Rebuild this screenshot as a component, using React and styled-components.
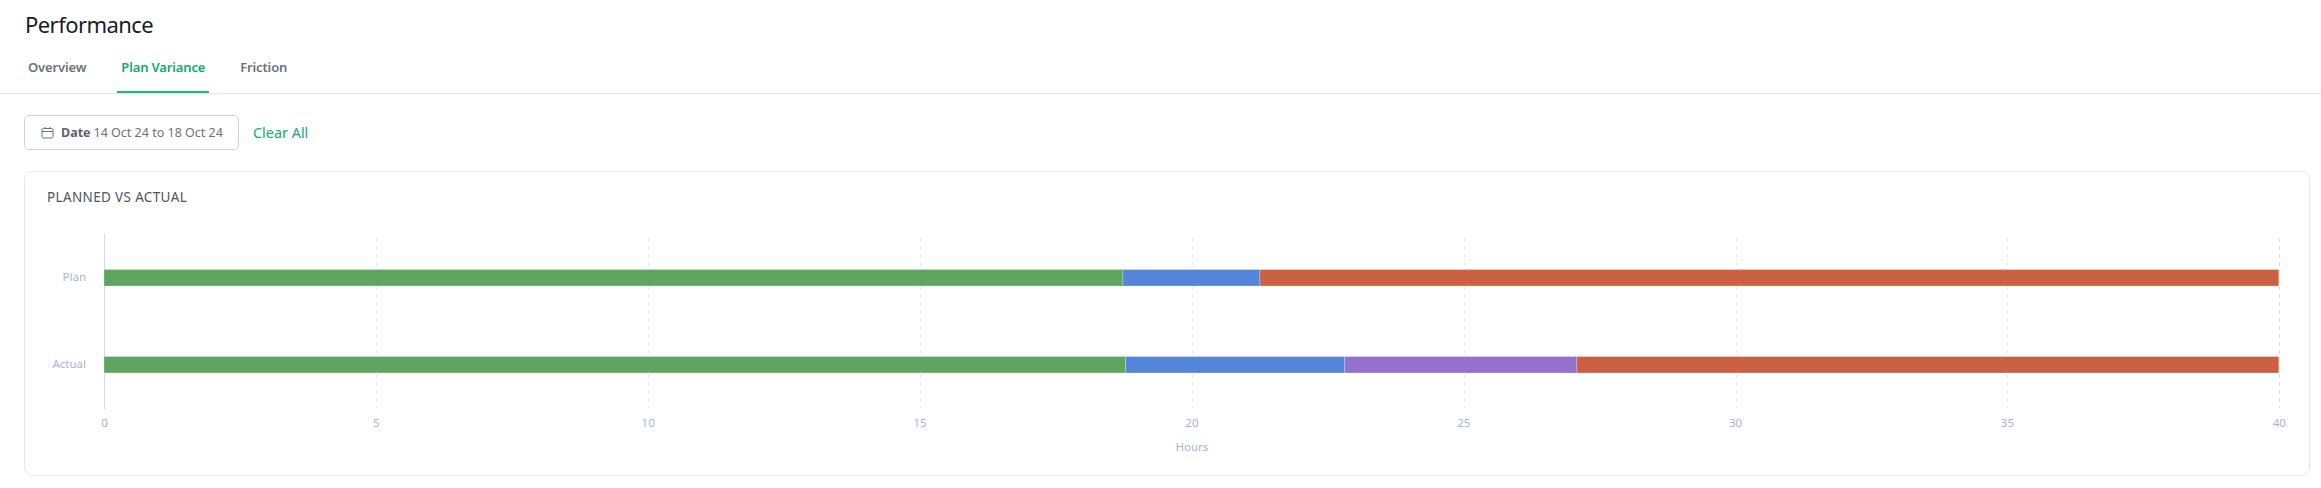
import styled, { createGlobalStyle } from "styled-components";

const GlobalStyle = createGlobalStyle`
  html, body {
    margin: 0;
    padding: 0;
    background: #fff;
    font-family: "Noto Sans", "Open Sans", sans-serif;
  }
`;

const Page = styled.div`
  width: 2321px;
  height: 488px;
  overflow: hidden;
  box-sizing: border-box;
`;

const Header = styled.header`
  height: 94px;
  box-sizing: border-box;
  border-bottom: 1px solid #e6e7eb;
  display: flex;
  flex-direction: column;
`;

const Title = styled.h1`
  margin: 0;
  padding: 8px 0 0 25px;
  height: 44px;
  box-sizing: border-box;
  font-size: 22px;
  line-height: 32px;
  font-weight: 400;
  letter-spacing: -0.55px;
  color: #161c2b;
`;

const Tabs = styled.nav`
  display: flex;
  padding-left: 24px;
  height: 50px;
`;

const Tab = styled.a`
  box-sizing: border-box;
  height: 50px;
  padding: 15px 4px 0;
  margin-right: ${(p) => p.$gap}px;
  font-size: 13px;
  line-height: 18px;
  font-weight: 600;
  letter-spacing: -0.15px;
  color: ${(p) => (p.$active ? "#12a96d" : "#6a7280")};
  border-bottom: 2px solid ${(p) => (p.$active ? "#12bf78" : "transparent")};
`;

const Filters = styled.div`
  display: flex;
  align-items: center;
  padding: 21px 0 0 24px;
  gap: 14px;
`;

const DateButton = styled.button`
  width: 215px;
  height: 35px;
  box-sizing: border-box;
  display: flex;
  align-items: center;
  padding: 0 0 0 16px;
  background: #fff;
  border: 1px solid #cfd1da;
  border-radius: 5px;
  font-family: inherit;
  font-size: 12.5px;
  color: #6a7280;
  white-space: nowrap;
`;

const DateLabel = styled.strong`
  font-weight: 700;
  margin: 0 3px 0 7px;
  color: #5c6472;
`;

const ClearAll = styled.a`
  font-size: 14.4px;
  color: #12a96d;
`;

const Card = styled.section`
  margin: 21px 0 0 24px;
  width: 2286px;
  height: 305px;
  box-sizing: border-box;
  border: 1px solid #e6e7eb;
  border-radius: 8px;
  padding: 16px 0 0 22px;
`;

const CardTitle = styled.h2`
  margin: 0;
  font-size: 13.5px;
  line-height: 18px;
  font-weight: 400;
  letter-spacing: 0.35px;
  color: #4d5462;
`;

const ChartSvg = styled.svg`
  display: block;
  margin: 0 0 0 -47px;

  text {
    font-family: "Noto Sans", "Open Sans", sans-serif;
    font-size: 11.5px;
    fill: #a3b4d8;
  }
`;

const X0 = 104.5;
const BAR_X0 = 104;
const HOUR = 54.37;
const x = (h) => X0 + h * HOUR;
const barX = (h) => BAR_X0 + h * HOUR;

const GREEN = "#5ea660";
const BLUE = "#5385d8";
const PURPLE = "#9271cf";
const RED = "#cb6042";

const rows = [
  {
    label: "Plan",
    y: 269.5,
    parts: [
      [0, 18.74, GREEN],
      [18.74, 21.26, BLUE],
      [21.26, 40, RED],
    ],
  },
  {
    label: "Actual",
    y: 356.5,
    parts: [
      [0, 18.79, GREEN],
      [18.79, 22.82, BLUE],
      [22.82, 27.09, PURPLE],
      [27.09, 40, RED],
    ],
  },
];

const ticks = [0, 5, 10, 15, 20, 25, 30, 35, 40];

// chart is drawn in page coordinates, offset by where the svg starts
const TOP = 206;

const CalendarIcon = () => (
  <svg width="13" height="13" viewBox="0 0 13 13" fill="none" stroke="#6a7280" strokeWidth="1">
    <rect x="1" y="2.5" width="11" height="9.5" rx="1.5" />
    <path d="M1 5.5h11M4 1v2M9 1v2" />
  </svg>
);

const Chart = () => (
  <ChartSvg width="2310" height="265" viewBox={`0 ${TOP} 2310 265`}>
    {ticks.slice(1).map((t) => (
      <line
        key={t}
        x1={Math.round(x(t)) + 0.5}
        x2={Math.round(x(t)) + 0.5}
        y1="238"
        y2="408"
        stroke={t === 40 ? "#d8dbe9" : "#e6e7eb"}
        strokeDasharray="4 4"
      />
    ))}
    <line x1={X0} x2={X0} y1="234" y2="409" stroke="#d6d9e3" />
    {rows.map((r) => (
      <g key={r.label}>
        <text x="86" y={Math.floor(r.y) + 12} textAnchor="end">
          {r.label}
        </text>
        {r.parts.map(([from, to, color]) => (
          <rect
            key={from}
            x={barX(from)}
            y={r.y}
            width={(to - from) * HOUR}
            height="16.5"
            fill={color}
            stroke="#fff"
            strokeOpacity="0.25"
            strokeWidth="1"
          />
        ))}
      </g>
    ))}
    {ticks.map((t) => (
      <text key={t} x={x(t)} y="427" textAnchor="middle">
        {t}
      </text>
    ))}
    <text x={x(20)} y="451" textAnchor="middle">
      Hours
    </text>
  </ChartSvg>
);

const App = () => (
  <Page>
    <GlobalStyle />
    <Header>
      <Title>Performance</Title>
      <Tabs>
        <Tab $gap={27}>Overview</Tab>
        <Tab $gap={27} $active>
          Plan Variance
        </Tab>
        <Tab $gap={0}>Friction</Tab>
      </Tabs>
    </Header>
    <Filters>
      <DateButton>
        <CalendarIcon />
        <DateLabel>Date</DateLabel>14 Oct 24 to 18 Oct 24
      </DateButton>
      <ClearAll>Clear All</ClearAll>
    </Filters>
    <Card>
      <CardTitle>PLANNED VS ACTUAL</CardTitle>
      <Chart />
    </Card>
  </Page>
);

export default App;
